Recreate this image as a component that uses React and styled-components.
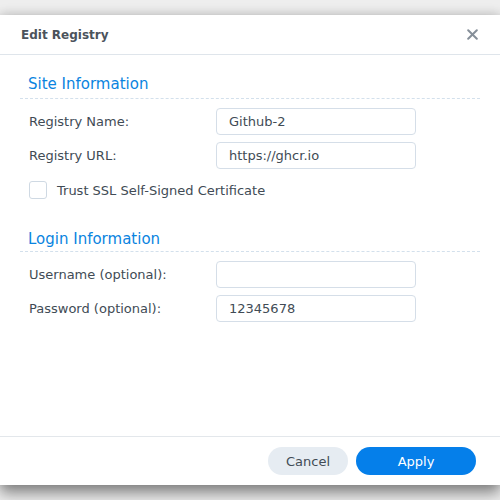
import React from 'react'
import styled, { createGlobalStyle } from 'styled-components'

const GlobalStyle = createGlobalStyle`
  html, body {
    margin: 0;
    padding: 0;
  }
  body {
    font-family: "DejaVu Sans", Verdana, sans-serif;
    background: #eeeeee;
  }
`

const CloseIcon = () => (
  <svg width="11" height="11" viewBox="0 0 11 11">
    <path d="M1.2 1.2 L9.8 9.8 M9.8 1.2 L1.2 9.8" stroke="#868f99" strokeWidth="2" strokeLinecap="round" />
  </svg>
)

const FormRow = ({ label, value }) => (
  <Row>
    <Label>{label}</Label>
    <Input defaultValue={value} />
  </Row>
)

const App = () => (
  <Page>
    <GlobalStyle />
    <Dialog>
      <Header>
        <Title>Edit Registry</Title>
        <CloseButton><CloseIcon /></CloseButton>
      </Header>

      <Body>
        <Section>
          <SectionTitle>Site Information</SectionTitle>
          <Rows>
            <FormRow label="Registry Name:" value="Github-2" />
            <FormRow label="Registry URL:" value="https://ghcr.io" />
          </Rows>
          <CheckRow>
            <Checkbox />
            <CheckLabel>Trust SSL Self-Signed Certificate</CheckLabel>
          </CheckRow>
        </Section>

        <Section second>
          <SectionTitle second>Login Information</SectionTitle>
          <Rows>
            <FormRow label="Username (optional):" value="" />
            <FormRow label="Password (optional):" value="12345678" />
          </Rows>
        </Section>
      </Body>

      <Footer>
        <Button>Cancel</Button>
        <Button primary>Apply</Button>
      </Footer>
    </Dialog>
  </Page>
)

export default App

const Page = styled.div`
  width: 500px;
  height: 500px;
  padding-top: 15px;
  box-sizing: border-box;
  background: #eeeeee;
  overflow: hidden;
`

const Dialog = styled.div`
  height: 470px;
  background: #ffffff;
  display: flex;
  flex-direction: column;
  box-shadow: 0 8px 14px rgba(0, 0, 0, 0.45), 0 -2px 10px rgba(0, 0, 0, 0.12);
`

const Header = styled.div`
  height: 39px;
  border-bottom: 1px solid #dfe5eb;
  display: flex;
  align-items: center;
  justify-content: space-between;
  padding: 0 22px 0 21px;
  flex-shrink: 0;
`

const Title = styled.div`
  font-size: 12px;
  font-weight: bold;
  color: #4b535c;
`

const CloseButton = styled.div`
  display: flex;
  align-items: center;
`

const Body = styled.div`
  flex: 1;
  padding: 19px 20px 0;
`

const Section = styled.div`
  margin-top: ${(p) => (p.second ? '30px' : '0')};
`

const SectionTitle = styled.div`
  font-size: 15px;
  line-height: 20px;
  color: #0a84e0;
  padding: 0 0 ${(p) => (p.second ? '2px' : '4px')} 8px;
  border-bottom: 1px dashed #d3e0ec;
`

const Rows = styled.div`
  display: flex;
  flex-direction: column;
  gap: 7px;
  margin-top: 9px;
`

const Row = styled.div`
  display: flex;
  align-items: center;
  padding-left: 9px;
`

const Label = styled.div`
  width: 187px;
  font-size: 13px;
  color: #414b55;
`

const Input = styled.input`
  width: 200px;
  height: 27px;
  box-sizing: border-box;
  border: 1px solid #d5dee8;
  border-radius: 4px;
  padding: 0 12px;
  font-family: "DejaVu Sans", Verdana, sans-serif;
  font-size: 13px;
  color: #414b55;
  outline: none;
`

const CheckRow = styled.div`
  display: flex;
  align-items: center;
  margin-top: 12px;
  padding-left: 9px;
`

const Checkbox = styled.div`
  width: 16px;
  height: 16px;
  border: 1px solid #cfd9e3;
  border-radius: 3px;
  margin-right: 10px;
`

const CheckLabel = styled.div`
  font-size: 13px;
  color: #414b55;
`

const Footer = styled.div`
  height: 48px;
  border-top: 1px solid #e3e7eb;
  display: flex;
  align-items: center;
  justify-content: flex-end;
  gap: 8px;
  padding: 0 24px;
  flex-shrink: 0;
`

const Button = styled.div`
  width: ${(p) => (p.primary ? '120px' : '80px')};
  height: 28px;
  border-radius: 14px;
  display: flex;
  align-items: center;
  justify-content: center;
  font-size: 13px;
  background: ${(p) => (p.primary ? '#057fea' : '#e6ecf2')};
  color: ${(p) => (p.primary ? '#ffffff' : '#414b55')};
`
